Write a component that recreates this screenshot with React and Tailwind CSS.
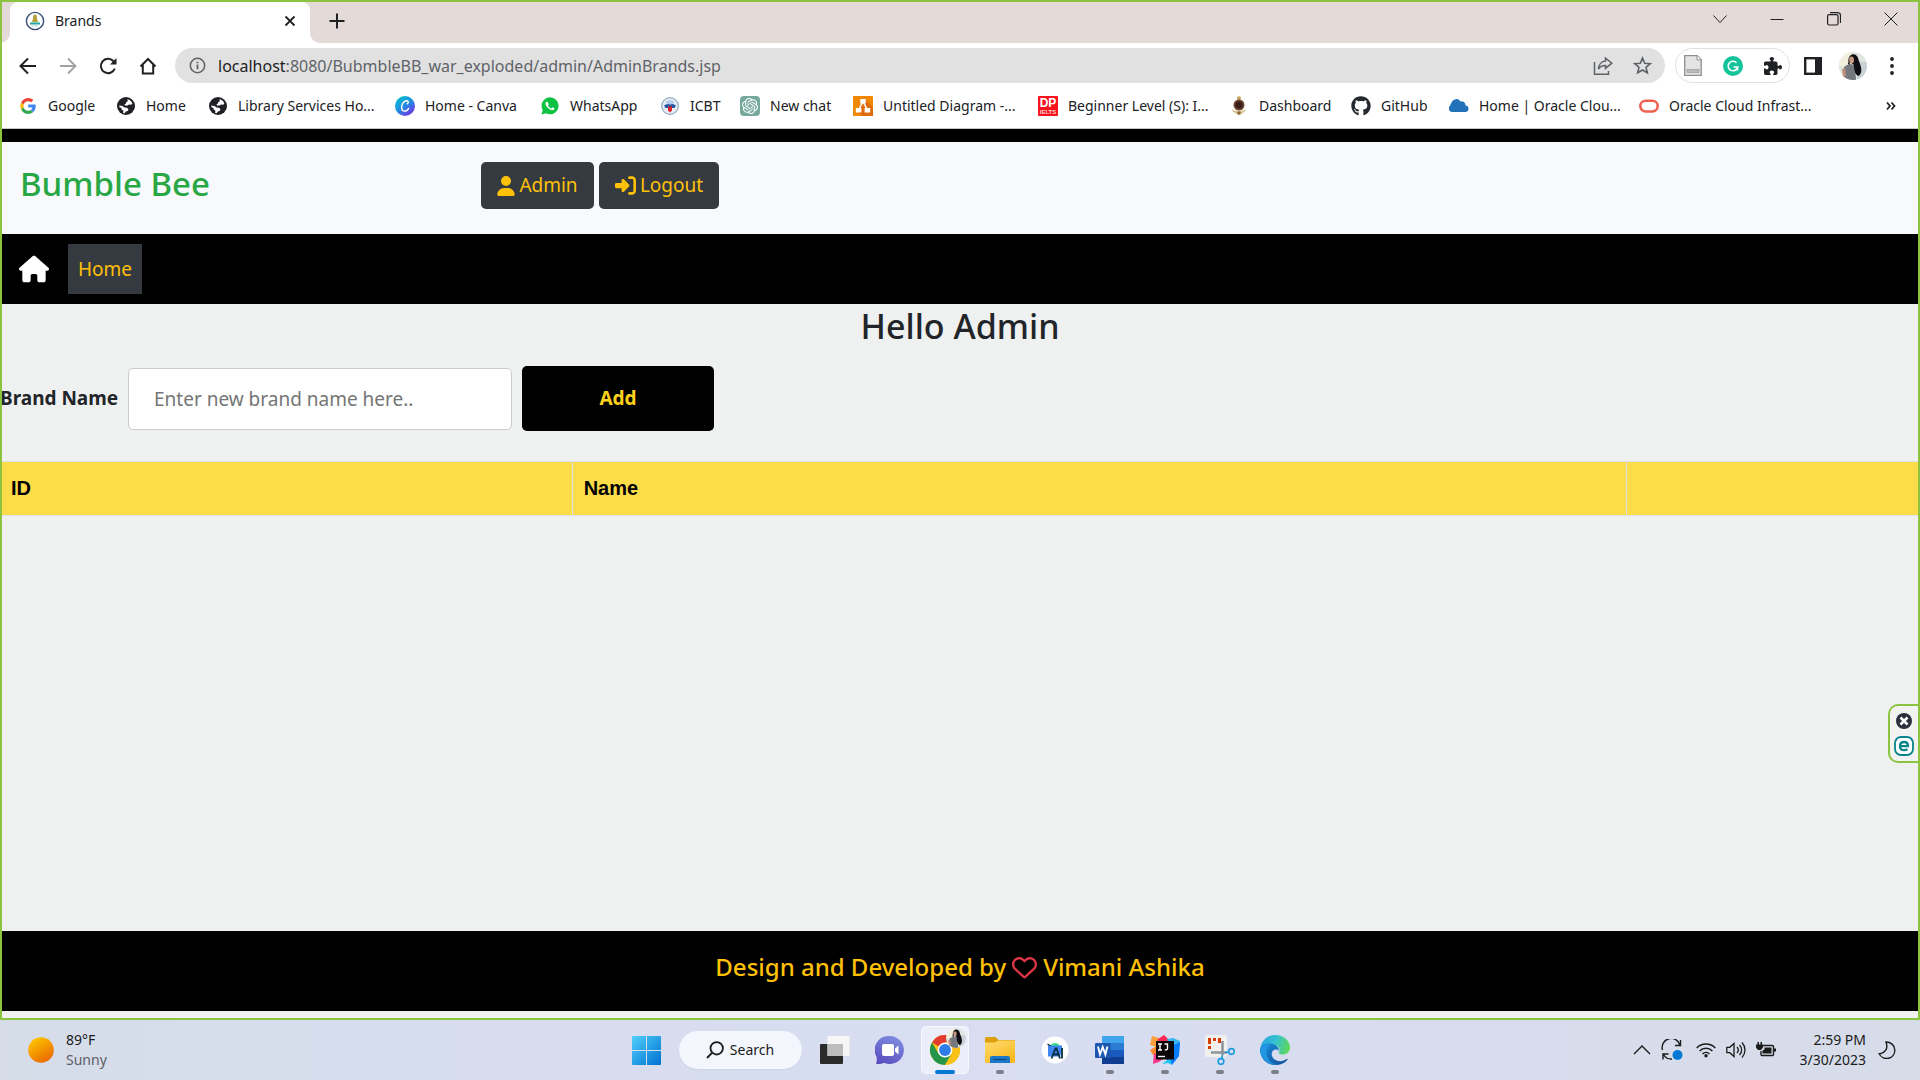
import React from "react";
import { FaUser, FaHouse, FaRightToBracket, FaRegHeart, FaGithub, FaPuzzlePiece } from "react-icons/fa6";
import { FcGoogle } from "react-icons/fc";
import { SiOpenai } from "react-icons/si";

/* ---------- Bookmark icons ---------- */

function GoogleIcon() {
  return (
    <svg viewBox="0 0 18 18" className="size-4">
      <path d="M3.900 9a5.200 5.200 0 0 1 .3-1.700L1.300 5A9 9 0 0 0 1.300 13l2.900-2.300A5.200 5.200 0 0 1 3.900 9z" fill="#fbbc05" />
      <path d="M9.200 3.600c1.300 0 2.400.5 3.300 1.200L15.100 2.200A8.900 8.900 0 0 0 1.300 5l2.900 2.300a5.300 5.300 0 0 1 5-3.700z" fill="#ea4335" />
      <path d="M9.200 14.400a5.300 5.300 0 0 1-5-3.700L1.300 13a8.900 8.900 0 0 0 7.900 5c2.200 0 4.200-.8 5.800-2.200l-2.800-2.200c-.8.500-1.800.8-3 .8z" fill="#34a853" />
      <path d="M17.700 9c0-.5-.1-1.100-.2-1.600H9.200v3.400h4.700a4 4 0 0 1-1.700 2.800l2.800 2.200c1.600-1.500 2.700-3.800 2.700-6.800z" fill="#4285f4" />
    </svg>
  );
}

function GlobeIcon() {
  return (
    <svg viewBox="0 0 18 18" className="size-[18px]">
      <circle cx="9" cy="9" r="9" fill="#202124" />
      <path d="M10.500 2.300c2.300.5 4.200 2.100 4.900 4.300l-1.200 1.200-2.200-.2-1.500.9-2.500.1-.5-1.300 1.500-.8.300-1.500 1.400-.6z" fill="#fff" />
      <path d="M2.200 8.500l3.300.6 2 1.500 2.400.2 1.600 1.400-.8 1.700-1.900.7-.9 1.500c-.7.100-1.200 0-1.700-.2l.2-2.100-1.700-1.400-.3-1.500-1.900-.7z" fill="#fff" />
    </svg>
  );
}

function CanvaIcon() {
  return (
    <svg viewBox="0 0 20 20" className="size-5">
      <defs>
        <linearGradient id="canva" x1="0.1" y1="0" x2="0.8" y2="1">
          <stop offset="0" stopColor="#00c4cc" />
          <stop offset="0.5" stopColor="#1f8fe0" />
          <stop offset="1" stopColor="#7d2ae8" />
        </linearGradient>
      </defs>
      <circle cx="10" cy="10" r="10" fill="url(#canva)" />
      <path d="M12.300 7.700c1.300-.2 1.500-3-.6-3-2.900 0-5.100 3.400-5.100 6.600 0 2.300 1.200 3.800 3.100 3.800 1.900 0 3.300-1.300 4-2.700" fill="none" stroke="#fff" strokeWidth="1.400" strokeLinecap="round" />
    </svg>
  );
}

function WhatsAppIcon() {
  return (
    <svg viewBox="0 0 20 20" className="size-5">
      <path d="M1.500 18.500l1.200-4.400A8.500 8.500 0 1 1 6 17.300z" fill="#0dc143" />
      <path d="M7 5.500c-.4-.2-1.500.7-1.500 2 0 2.600 4 6.600 7 6.600 1.300 0 2.200-1 2-1.800l-2-1.100-1.200 1.200c-1.500-.5-2.700-1.700-3.300-3l1-1.100z" fill="#fff" />
    </svg>
  );
}

function IcbtIcon() {
  return (
    <svg viewBox="0 0 18 18" className="size-[18px]">
      <circle cx="9" cy="9" r="8.300" fill="#e8eef4" stroke="#8fa9bd" strokeWidth="1.200" />
      <path d="M4.500 4.500Q9 1.500 13.500 4.500L12 7H6z" fill="#b4cdea" />
      <path d="M3 8.500Q6 6 9 7.500 12 6 15 8.500L13.500 11h-9z" fill="#2357a5" />
      <path d="M7 8.500l2 1.500 2-1.500v5L9 15.500l-2-2z" fill="#d8232f" />
    </svg>
  );
}

function ChatIcon() {
  return (
    <span className="flex size-5 items-center justify-center rounded-sm bg-[#75a99c]">
      <SiOpenai className="size-4 text-white" />
    </span>
  );
}

function DiagramIcon() {
  return (
    <svg viewBox="0 0 20 20" className="size-5">
      <rect width="20" height="20" rx="1" fill="#f08705" />
      <path d="M12 3.500l8 8V20H9l-6-6z" fill="#df6c0c" />
      <path d="M10 5.500L5.500 14M10 5.500l4.500 8.500" stroke="#fff" strokeWidth="1.600" />
      <rect x="7.200" y="3" width="5.600" height="4.600" rx=".6" fill="#fff" />
      <rect x="2.800" y="12" width="5.600" height="4.600" rx=".6" fill="#fff" />
      <rect x="11.600" y="12" width="5.600" height="4.600" rx=".6" fill="#fff" />
    </svg>
  );
}

function DpIcon() {
  return (
    <svg viewBox="0 0 20 20" className="size-5">
      <rect width="20" height="20" rx="1" fill="#f5141c" />
      <text x="10" y="11" textAnchor="middle" fontFamily="Liberation Sans" fontWeight="700" fontSize="12" fill="#fff">DP</text>
      <text x="10" y="17.500" textAnchor="middle" fontFamily="Liberation Sans" fontWeight="700" fontSize="6" fill="#ffd0d0">IELTS</text>
    </svg>
  );
}

function CrestIcon() {
  return (
    <svg viewBox="0 0 18 20" className="h-5 w-[18px]">
      <circle cx="9" cy="2.300" r="2" fill="#c9a45c" />
      <circle cx="9" cy="9" r="5.500" fill="#6a4030" />
      <circle cx="9" cy="9" r="3.500" fill="#3a1c18" />
      <path d="M2 12.500c1.500 3.500 12.500 3.500 14 0-.3 3.500-4 5-7 6.700-3-1.700-6.700-3.200-7-6.700z" fill="#d9c089" />
      <circle cx="9" cy="17" r="1.800" fill="#8a6a3c" />
    </svg>
  );
}

function CloudIcon() {
  return (
    <svg viewBox="0 0 20 20" className="size-5">
      <path d="M3.500 16a3.500 3.500 0 0 1-2.500-6.200l1.500-3.300A5 5 0 0 1 11.500 5.500a3.800 3.800 0 0 1 5 4A3.300 3.300 0 0 1 17 16z" fill="#2272b9" />
    </svg>
  );
}

function OracleIcon() {
  return (
    <svg viewBox="0 0 20 20" className="size-5">
      <rect x="1.300" y="4.800" width="17.400" height="10.600" rx="5.300" fill="none" stroke="#ee5f50" strokeWidth="2.500" />
    </svg>
  );
}

const bookmarks = [
  { label: "Google", icon: <GoogleIcon />, width: "w-[98px]" },
  { label: "Home", icon: <GlobeIcon />, width: "w-[92px]" },
  { label: "Library Services Ho...", icon: <GlobeIcon />, width: "w-[187px]" },
  { label: "Home - Canva", icon: <CanvaIcon />, width: "w-[145px]" },
  { label: "WhatsApp", icon: <WhatsAppIcon />, width: "w-[120px]" },
  { label: "ICBT", icon: <IcbtIcon />, width: "w-[80px]" },
  { label: "New chat", icon: <ChatIcon />, width: "w-[113px]" },
  { label: "Untitled Diagram -...", icon: <DiagramIcon />, width: "w-[185px]" },
  { label: "Beginner Level (S): I...", icon: <DpIcon />, width: "w-[191px]" },
  { label: "Dashboard", icon: <CrestIcon />, width: "w-[122px]" },
  { label: "GitHub", icon: <FaGithub className="size-5 text-[#24292f]" />, width: "w-[98px]" },
  { label: "Home | Oracle Clou...", icon: <CloudIcon />, width: "w-[190px]" },
  { label: "Oracle Cloud Infrast...", icon: <OracleIcon />, width: "w-[190px]" },
];

/* ---------- Browser chrome ---------- */

function Favicon() {
  return (
    <svg viewBox="0 0 20 20" className="size-5">
      <circle cx="10" cy="10" r="8.600" fill="#fff" stroke="#3b4e78" strokeWidth="1.400" />
      <path d="M10 3.500c1.500 0 2 1.500 2 3.500s1 2.500 1 4H7c0-1.500 1-2 1-4s.5-3.500 2-3.500z" fill="#b5a13a" />
      <path d="M5 12.500h10" stroke="#1fa39b" strokeWidth="2" />
      <path d="M7 15h6" stroke="#a9d8d5" strokeWidth="1" />
    </svg>
  );
}

function Avatar({ className }) {
  return (
    <svg viewBox="0 0 28 28" className={className}>
      <defs>
        <clipPath id="face"><circle cx="14" cy="14" r="14" /></clipPath>
      </defs>
      <g clipPath="url(#face)">
        <rect width="28" height="28" fill="#dfe6df" />
        <path d="M0 0h12v14H0z" fill="#f3efdf" />
        <path d="M18 10h10v18H18z" fill="#c9d3d6" />
        <path d="M5 15c3-3 8-4 11-1l1 14H4z" fill="#74787f" />
        <path d="M3 17l3-1 1 8-3 1z" fill="#c08f78" />
        <path d="M9.500 9c-.5-8 8-9 9.500-3 1 4 3 7 3.300 11 .2 4-1.300 6-2.800 7-3-1-4.500-5-4.500-11z" fill="#0e0e13" />
        <ellipse cx="12.500" cy="8" rx="2.500" ry="3.500" fill="#c99a83" />
        <path d="M9 12l1-5 1 6z" fill="#0e0e13" />
      </g>
    </svg>
  );
}

const iconButton = "flex shrink-0 items-center justify-center text-[#202124]";

function TabStrip() {
  return (
    <div className="flex h-[43px] items-end bg-[#e4dad7] pt-[2px]">
      <svg viewBox="0 0 10 10" className="size-[10px]"><path d="M0 10A10 10 0 0 0 10 0v10z" fill="#fff" /></svg>
      <div className="flex h-full w-[300px] items-center rounded-t-lg bg-white pr-[14px] pb-1 pl-[15px]">
        <Favicon />
        <span className="ml-[10px] flex-1 text-sm text-[#202124]">Brands</span>
        <button aria-label="Close tab" className={iconButton}>
          <svg viewBox="0 0 12 12" className="size-3" stroke="currentColor" strokeWidth="1.800"><path d="M1.500 1.500l9 9M10.500 1.500l-9 9" /></svg>
        </button>
      </div>
      <svg viewBox="0 0 10 10" className="size-[10px]"><path d="M10 10A10 10 0 0 1 0 0v10z" fill="#fff" /></svg>
      <button aria-label="New tab" className={`${iconButton} ml-[9px] h-full w-4 pb-1`}>
        <svg viewBox="0 0 16 16" className="size-4" stroke="currentColor" strokeWidth="2"><path d="M8 0.500v15M.5 8h15" /></svg>
      </button>
      <div className="ml-auto flex h-full items-start text-[#202124]">
        <button aria-label="Search tabs" className="flex h-[33px] w-[57px] items-center justify-center">
          <svg viewBox="0 0 14 14" className="size-[14px]" fill="none" stroke="currentColor"><path d="M.5 3.500L7 10.500l6.500-7" /></svg>
        </button>
        <button aria-label="Minimize" className="flex h-[33px] w-[57px] items-center justify-center">
          <svg viewBox="0 0 14 14" className="size-[14px]" fill="none" stroke="currentColor"><path d="M.5 7.500h13" /></svg>
        </button>
        <button aria-label="Restore" className="flex h-[33px] w-[57px] items-center justify-center">
          <svg viewBox="0 0 14 14" className="size-[14px]" fill="none" stroke="currentColor" strokeWidth="1.200"><rect x=".6" y="2.600" width="10.400" height="10.400" rx="1.500" /><path d="M3 .6h7.500a3 3 0 0 1 3 3V11" /></svg>
        </button>
        <button aria-label="Close" className="flex h-[33px] w-[58px] items-center justify-center">
          <svg viewBox="0 0 14 14" className="size-[14px]" fill="none" stroke="currentColor"><path d="M.5.5l13 13M13.500.5l-13 13" /></svg>
        </button>
      </div>
    </div>
  );
}

function Toolbar() {
  return (
    <div className="flex h-[45px] items-center bg-white pl-[19px]">
      <div className="flex w-[156px] items-center gap-[22px]">
        <button aria-label="Back" className={iconButton}>
          <svg viewBox="0 0 18 18" className="size-[18px]" fill="none" stroke="currentColor" strokeWidth="2"><path d="M17 9H2M9 1.500L1.500 9 9 16.500" /></svg>
        </button>
        <button aria-label="Forward" className={iconButton}>
          <svg viewBox="0 0 18 18" className="size-[18px]" fill="none" stroke="#a0a1a3" strokeWidth="1.800"><path d="M1 9h15M9 1.500L16.500 9 9 16.500" /></svg>
        </button>
        <button aria-label="Reload" className={iconButton}>
          <svg viewBox="0 0 18 18" className="size-[18px]" fill="none" stroke="currentColor" strokeWidth="2"><path d="M15.800 11.500A7.200 7.200 0 1 1 14.300 4l2 2" /><path d="M17.500 1v6.500H11z" fill="currentColor" stroke="none" /></svg>
        </button>
        <button aria-label="Home" className={iconButton}>
          <svg viewBox="0 0 18 18" className="size-[18px]" fill="none" stroke="currentColor" strokeWidth="2"><path d="M1.500 9.500L9 2l7.500 7.500M3.800 8v8.500h10.400V8" /></svg>
        </button>
      </div>
      <div className="flex h-[35px] min-w-0 flex-1 items-center rounded-full bg-[#e1e1e1] pr-[13px] pl-[14px] text-[#5f6368]">
        <svg viewBox="0 0 18 18" className="size-[17px]" fill="none" stroke="currentColor" strokeWidth="1.600"><circle cx="9" cy="9" r="7.600" /><path d="M9 8v5M9 5v1.700" strokeWidth="1.900" /></svg>
        <p className="ml-3 flex-1 truncate text-base">
          <span className="text-[#202124]">localhost</span>:8080/BubmbleBB_war_exploded/admin/AdminBrands.jsp
        </p>
        <button aria-label="Share" className="mr-5">
          <svg viewBox="0 0 20 20" className="size-5" fill="none" stroke="currentColor" strokeWidth="1.500"><path d="M1.500 6v12.300h14V15" /><path d="M12.500 2l6.300 5.200-6.300 5.200V9.500c-3.500 0-5.500 1-7 3.500.2-4.500 3-7.700 7-8z" /></svg>
        </button>
        <button aria-label="Bookmark this page">
          <svg viewBox="0 0 20 20" className="size-[19px]" fill="none" stroke="currentColor" strokeWidth="1.700"><path d="M10 2.200l2.300 5.400 5.900.5-4.500 3.900 1.400 5.700-5.100-3-5.100 3L6.300 12 1.800 8.100l5.900-.5z" /></svg>
        </button>
      </div>
      <div className="ml-[10px] flex h-[35px] w-[115px] items-center justify-between rounded-full border border-[#dfe0e2] pr-[7px] pl-2">
        <button aria-label="Page notes">
          <svg viewBox="0 0 18 21" className="h-[21px] w-[18px]"><path d="M.7.7h12.500l4 4v15.600H.7z" fill="#e4e4e4" stroke="#8f8f8f" strokeWidth="1.300" /><path d="M13 .7v4.200h4.200" fill="#fff" stroke="#8f8f8f" /><rect x="3" y="14.500" width="12" height="3" fill="#b9b9b9" stroke="#8f8f8f" strokeWidth=".6" /></svg>
        </button>
        <button aria-label="Grammar check">
          <svg viewBox="0 0 20 20" className="size-5"><circle cx="10" cy="10" r="10" fill="#15c39a" /><path d="M13.500 6.700A4.800 4.800 0 1 0 14.700 11H10.500M14.700 11l-.3 3.500" fill="none" stroke="#fff" strokeWidth="1.600" /></svg>
        </button>
        <button aria-label="Extensions" className={iconButton}><FaPuzzlePiece className="size-[18px]" /></button>
      </div>
      <button aria-label="Side panel" className={`${iconButton} ml-[14px]`}>
        <svg viewBox="0 0 18 18" className="size-[18px]"><rect x="1.200" y="1.200" width="15.600" height="15.600" fill="none" stroke="currentColor" strokeWidth="2.400" /><path d="M11 1h6v16h-6z" fill="currentColor" /></svg>
      </button>
      <button aria-label="Profile" className="ml-[17px]"><Avatar className="size-7" /></button>
      <button aria-label="Menu" className={`${iconButton} mr-[19px] ml-4 w-[18px]`}>
        <svg viewBox="0 0 4 18" className="h-[18px] w-1" fill="currentColor"><circle cx="2" cy="2" r="1.900" /><circle cx="2" cy="9" r="1.900" /><circle cx="2" cy="16" r="1.900" /></svg>
      </button>
    </div>
  );
}

function BookmarksBar() {
  return (
    <nav aria-label="Bookmarks" className="flex h-[41px] items-center border-b border-[#c9c9c9] bg-white pb-1 pl-[18px] text-sm text-[#202124]">
      {bookmarks.map((b) => (
        <a key={b.label} href="#" className={`${b.width} flex shrink-0 items-center whitespace-nowrap`}>
          <span className="mr-[10px] flex w-5 shrink-0 justify-center">{b.icon}</span>
          {b.label}
        </a>
      ))}
      <button aria-label="More bookmarks" className="mr-6 ml-auto">
        <svg viewBox="0 0 10 10" className="size-[10px]" fill="none" stroke="#202124" strokeWidth="1.800"><path d="M1 1.500L4 5 1 8.500M5.500 1.500l3 3.500-3 3.500" /></svg>
      </button>
    </nav>
  );
}

/* ---------- Page ---------- */

function SiteHeader() {
  const button = "flex h-[47px] items-center justify-center gap-1 rounded-[5px] bg-[#343a40] text-[19px] text-[#ffc107]";
  return (
    <header>
      <div className="flex h-[105px] items-start border-t-[13px] border-black bg-[#f8f9fc]">
        <h1 className="w-1/4 pt-4 pl-5 text-[33px] leading-[52px] font-medium text-[#28a745]">Bumble Bee</h1>
        <div className="flex gap-[5px] pt-5 pl-px">
          <button className={`${button} w-[113px]`}><FaUser className="h-5 w-[18px]" />Admin</button>
          <button className={`${button} w-[120px]`}><FaRightToBracket className="size-[21px]" />Logout</button>
        </div>
      </div>
      <nav className="flex h-[70px] items-center gap-[19px] bg-black pl-[19px]">
        <a href="#" aria-label="Start page"><FaHouse className="size-[30px] text-white" /></a>
        <a href="#" className="flex h-[50px] w-[74px] items-center justify-center bg-[#343a40] text-[19px] text-[#ffc107]">Home</a>
      </nav>
    </header>
  );
}

function BrandPage() {
  return (
    <main className="flex-1">
      <h2 className="text-center text-[34px] leading-[44px] font-medium text-[#212529]">Hello Admin</h2>
      <form className="mt-[18px] flex h-[65px] items-center" onSubmit={(e) => e.preventDefault()}>
        <label htmlFor="brand" className="w-32 shrink-0 text-[19px] font-bold whitespace-nowrap text-[#212529]">Brand Name</label>
        <input id="brand" type="text" placeholder="Enter new brand name here.." className="h-[62px] w-1/5 rounded-[5px] border border-[#ccc] bg-white px-[25px] text-[19px] text-[#212529] placeholder:text-[#757575]" />
        <button className="ml-[10px] h-full w-1/10 rounded-[5px] bg-black text-[19px] font-bold text-[#ffd11a]">Add</button>
      </form>
      <table className="mt-[30px] w-full table-fixed border-collapse font-['Liberation_Sans',sans-serif] text-xl text-black">
        <thead>
          <tr className="h-[54px] border-y border-[#dee2e6] bg-[#fddc4a] text-left">
            <th className="w-[29.8%] border-r border-[#dee2e6] pb-[2px] pl-[11px]">ID</th>
            <th className="w-[54.9%] border-r border-[#dee2e6] pb-[2px] pl-[11px]">Name</th>
            <th aria-label="Actions" />
          </tr>
        </thead>
      </table>
    </main>
  );
}

function SideWidget() {
  return (
    <div className="absolute top-[704px] right-0 flex h-[59px] w-8 flex-col items-center justify-center gap-[7px] rounded-l-[10px] border-2 border-r-0 border-[#8bc53f] bg-[#f3f3f3] pt-[2px] pr-[2px]">
      <button aria-label="Dismiss">
        <svg viewBox="0 0 16 16" className="size-4"><circle cx="8" cy="8" r="8" fill="#2d2f3c" /><path d="M4.500 4.500l7 7M11.500 4.500l-7 7" stroke="#fff" strokeWidth="2.600" /></svg>
      </button>
      <button aria-label="Open assistant">
        <svg viewBox="0 0 20 20" className="size-5"><rect x="1" y="1" width="18" height="18" rx="6" fill="#fff" stroke="#0b868c" strokeWidth="1.800" /><path d="M6 10.200h8c0-2.500-1.500-4.200-3.900-4.200S6 7.600 6 10.200s1.600 4 4.200 4c1.300 0 2.400-.3 3.300-.9" fill="none" stroke="#0b868c" strokeWidth="2.300" /></svg>
      </button>
    </div>
  );
}

/* ---------- Taskbar ---------- */

function TaskViewIcon() {
  return (
    <svg viewBox="0 0 30 30" className="size-[30px]">
      <rect x="0" y="9" width="23" height="20" rx="1" fill="#2b2b2b" />
      <rect x="7.500" y="1" width="22" height="20" rx="1" fill="#f6f6f6" />
      <rect x="7.500" y="9" width="15.500" height="12" fill="#bdbdbd" />
    </svg>
  );
}

function ChatAppIcon() {
  return (
    <svg viewBox="0 0 30 30" className="size-[30px]">
      <defs><linearGradient id="chat" x1=".8" y1="0" x2=".3" y2="1"><stop offset="0" stopColor="#7f8fe0" /><stop offset="1" stopColor="#5b4fc0" /></linearGradient></defs>
      <path d="M15 1a14 14 0 1 1-6 26.700c-2.500 1.300-5 1.600-8 1.300.8-2 1-4 .6-7A14 14 0 0 1 15 1z" fill="url(#chat)" />
      <rect x="7" y="9" width="12" height="12" rx="2" fill="#fff" />
      <path d="M20 13.500l3.500-3v9l-3.500-3z" fill="#fff" />
    </svg>
  );
}

function ChromeIcon() {
  return (
    <span className="relative">
      <svg viewBox="0 0 30 30" className="size-[30px]">
        <circle cx="15" cy="15" r="15" fill="#fbc116" />
        <path d="M15 15L2 7.500A15 15 0 0 1 28 7.500H15z" fill="#e33b2e" />
        <path d="M2 7.500A15 15 0 0 0 15 30l6.500-11.300L15 15 8.500 18.700z" fill="#23964a" />
        <path d="M15 7.500h13A15 15 0 0 1 15 30l6.500-11.300z" fill="#fbc116" />
        <circle cx="15" cy="15" r="7.400" fill="#fff" />
        <circle cx="15" cy="15" r="5.900" fill="#2f7ee8" />
      </svg>
      <Avatar className="absolute -top-[7px] left-4 size-5" />
    </span>
  );
}

function FolderIcon() {
  return (
    <svg viewBox="0 0 30 30" className="size-[30px]">
      <defs><linearGradient id="folder" x1="0" y1="0" x2=".6" y2="1"><stop offset="0" stopColor="#ffdc73" /><stop offset="1" stopColor="#f9b91c" /></linearGradient></defs>
      <path d="M0 3.500A1.500 1.500 0 0 1 1.500 2h9l3 3H30v4H0z" fill="#dda00c" />
      <path d="M0 7.500h10l3-2h17v21A1.500 1.500 0 0 1 28.500 28h-27A1.500 1.500 0 0 1 0 26.500z" fill="url(#folder)" />
      <path d="M5 28v-5a2 2 0 0 1 2-2h16a2 2 0 0 1 2 2v5z" fill="#1b78c6" />
      <path d="M8.500 24.500h13" stroke="#0e4a80" strokeWidth="1.300" />
    </svg>
  );
}

function AndroidStudioIcon() {
  return (
    <svg viewBox="0 0 28 28" className="size-7">
      <circle cx="14" cy="14" r="13.500" fill="#fff" />
      <path d="M9 10a5.500 5 0 0 1 10 0z" fill="#3ddc84" />
      <path d="M7 9.500h14v5l-2 6H7z" fill="#4285f4" />
      <path d="M10.500 22.500l4-10h1l3.500 10M12.500 18.500h5M21 12v10.500" fill="none" stroke="#073042" strokeWidth="1.800" />
      <path d="M6.500 8l3 2" stroke="#073042" strokeWidth="1.500" />
    </svg>
  );
}

function WordIcon() {
  return (
    <svg viewBox="0 0 30 30" className="size-[30px]">
      <path d="M7 1h22v7H7z" fill="#41a5ee" />
      <path d="M7 8h22v7H7z" fill="#2b7cd3" />
      <path d="M7 15h22v7H7z" fill="#185abd" />
      <path d="M7 22h22v7H7z" fill="#103f91" />
      <rect x="0" y="8" width="15.500" height="15" rx="1.300" fill="#1b56b0" />
      <path d="M3 11.500l2 8 2.700-7.500 2.700 7.500 2-8" fill="none" stroke="#fff" strokeWidth="1.900" />
    </svg>
  );
}

function IntellijIcon() {
  return (
    <svg viewBox="0 0 30 30" className="size-[30px]">
      <path d="M2 1l7 2-2 9-7-2z" fill="#fc9f3c" />
      <path d="M8 4l6-4 5 5-3 8-9-2z" fill="#fe2857" />
      <path d="M0 15l8-5 2 13-7-3z" fill="#fb8b2e" />
      <path d="M3 29l1-11 9 6-4 3z" fill="#f93b8e" />
      <path d="M17 4l6-1 7 3-1 9-8 2z" fill="#38b6f1" />
      <path d="M30 7l-1 14-7 9-6-6 8-14z" fill="#087cfa" />
      <path d="M12 29l8-6 2 7-4-2z" fill="#20c2f5" />
      <rect x="6" y="6" width="18" height="18.500" fill="#0b0608" />
      <path d="M8 9h4M10 9v6M8 15h4M14.500 9h3v4.500q0 1.700-2.800 1.300" fill="none" stroke="#fff" strokeWidth="1.400" />
      <path d="M8 21.500h7" stroke="#fff" strokeWidth="1.400" />
    </svg>
  );
}

function SnipIcon() {
  return (
    <svg viewBox="0 0 30 30" className="size-[30px]">
      <rect x="0" y="0" width="22" height="22" rx="2.500" fill="#f1f0ee" />
      <path d="M3 4.500h13M4.500 6v10M14.500 6v2" fill="none" stroke="#d83b01" strokeWidth="3" strokeDasharray="3 2" />
      <path d="M17.500 6v14M6 17.500h16" fill="none" stroke="#8b9299" strokeWidth="2.500" />
      <circle cx="26.500" cy="16.500" r="2.800" fill="none" stroke="#1f9be0" strokeWidth="1.700" />
      <circle cx="16" cy="26.500" r="2.800" fill="none" stroke="#1f9be0" strokeWidth="1.700" />
      <path d="M20 17.500l4-.5M17.500 20l-1 4" stroke="#1f9be0" strokeWidth="1.700" />
    </svg>
  );
}

function EdgeIcon() {
  return (
    <svg viewBox="0 0 30 30" className="size-[30px]">
      <defs>
        <linearGradient id="edgeTop" x1="0" y1=".3" x2="1" y2=".5"><stop offset="0" stopColor="#2aa5e0" /><stop offset=".5" stopColor="#35c1d0" /><stop offset="1" stopColor="#5fd85a" /></linearGradient>
        <linearGradient id="edgeLow" x1="0" y1="0" x2="1" y2="1"><stop offset="0" stopColor="#1b8fdc" /><stop offset="1" stopColor="#0f4f9c" /></linearGradient>
      </defs>
      <path d="M.5 13C1.500 5.500 7.500 0 15 0c9 0 15 6 15 12.500 0 4-3 7-7 7-3 0-5-1-4-2.500 2-3-1-7-5.500-7C8 10 2 10.500.5 13z" fill="url(#edgeTop)" />
      <path d="M.1 14C1 9.500 6 8 10.500 8.500c5 .5 9 4 8.300 7.500-2.500-3-7.800-1-7 4 .7 4.500 6.500 7.500 12 5.500 2.500-1 3.700-2 4-1.500C25.500 28 20.500 30 15 30 6 30-.5 22.500.1 14z" fill="url(#edgeLow)" />
      <path d="M10 10c-4 3-4.500 9-2 13.500 2 3.500 5.500 6 10 6.100C10 31 .5 25 .1 14.500.8 11 5.500 8.500 10 10z" fill="#2196e3" />
    </svg>
  );
}

const apps = [
  { name: "Task view", icon: <TaskViewIcon />, state: "idle" },
  { name: "Chat", icon: <ChatAppIcon />, state: "idle" },
  { name: "Chrome", icon: <ChromeIcon />, state: "active" },
  { name: "File Explorer", icon: <FolderIcon />, state: "open" },
  { name: "Android Studio", icon: <AndroidStudioIcon />, state: "idle" },
  { name: "Word", icon: <WordIcon />, state: "open" },
  { name: "IntelliJ IDEA", icon: <IntellijIcon />, state: "open" },
  { name: "Snipping Tool", icon: <SnipIcon />, state: "open" },
  { name: "Edge", icon: <EdgeIcon />, state: "open" },
];

const cellStyle = {
  idle: "",
  open: "",
  active: "rounded-[5px] border border-white/60 bg-white/50",
};

const markStyle = {
  idle: "",
  open: "w-2 bg-[#7b7f88]",
  active: "w-5 bg-[#0078d4]",
};

function Taskbar() {
  return (
    <footer className="grid h-[60px] grid-cols-[1fr_auto_1fr] items-center bg-linear-to-r from-[#d6dde9] via-[#d8ddf2] to-[#d6dce8]">
      <div className="flex items-center gap-3 pl-7">
        <svg viewBox="0 0 26 26" className="size-[26px]">
          <defs><linearGradient id="sun" x1=".2" y1="0" x2=".8" y2="1"><stop offset="0" stopColor="#ffc800" /><stop offset="1" stopColor="#e86400" /></linearGradient></defs>
          <circle cx="13" cy="13" r="12.800" fill="url(#sun)" />
        </svg>
        <p className="text-sm leading-5 text-[#1b1b1b]">89°F<br /><span className="text-[#5d6068]">Sunny</span></p>
      </div>
      <div className="flex items-center pl-[14px]">
        <button aria-label="Start">
          <svg viewBox="0 0 29 29" className="size-[29px]">
            <defs><linearGradient id="win" x1="0" y1="0" x2="1" y2="1"><stop offset="0" stopColor="#4fd0fb" /><stop offset="1" stopColor="#0070d0" /></linearGradient></defs>
            <path d="M0 1q0-1 1-1h13v14H0zM15 0h13q1 0 1 1v13H15zM0 15h14v14H1q-1 0-1-1zM15 15h14v13q0 1-1 1H15z" fill="url(#win)" />
          </svg>
        </button>
        <button className="ml-[18px] flex h-[38px] w-[123px] items-center justify-center gap-[6px] rounded-full bg-[#f3f6fc] text-sm text-[#1b1b1b] shadow-xs">
          <svg viewBox="0 0 18 18" className="size-[18px]" fill="none" stroke="currentColor" strokeWidth="1.800"><circle cx="10.700" cy="7.300" r="6.200" /><path d="M6.300 11.700L1 17" /></svg>
          Search
        </button>
        <div className="ml-[6px] flex">
          {apps.map((app) => (
            <button key={app.name} aria-label={app.name} className="relative flex h-12 w-[55px] justify-center">
              <span className={`flex h-12 w-12 items-center justify-center ${cellStyle[app.state]}`}>{app.icon}</span>
              <span className={`absolute bottom-0 h-1 rounded-full ${markStyle[app.state]}`} />
            </button>
          ))}
        </div>
      </div>
      <div className="flex items-center justify-end pr-6 text-[#1b1b1b]">
        <button aria-label="Hidden icons"><svg viewBox="0 0 18 18" className="size-[18px]" fill="none" stroke="currentColor" strokeWidth="1.400"><path d="M1 13l8-8 8 8" /></svg></button>
        <svg viewBox="0 0 22 22" className="ml-[10px] size-[22px]" fill="none" stroke="currentColor" strokeWidth="1.400"><path d="M1.500 11A9 9 0 0 1 19 6M19.500 1v5.500H14M2 20.500V15h5.500M2.500 15.500A9 9 0 0 0 11 20" /><circle cx="16.500" cy="16" r="5" fill="#0078d4" stroke="none" /></svg>
        <svg viewBox="0 0 20 16" className="ml-[13px] h-4 w-5" fill="none" stroke="currentColor" strokeWidth="1.500"><path d="M.7 6a13 13 0 0 1 18.600 0M3.600 9a9 9 0 0 1 12.800 0M6.500 12a5 5 0 0 1 7 0" /><circle cx="10" cy="13.800" r="1.700" fill="currentColor" stroke="none" /></svg>
        <svg viewBox="0 0 20 18" className="ml-[10px] h-[18px] w-5" fill="none" stroke="currentColor" strokeWidth="1.300"><path d="M.8 6.300h3L8 2.500v13l-4.200-3.800h-3zM11 6a4.500 4.500 0 0 1 0 6M13.500 4a7 7 0 0 1 0 10M16 1.500a11 11 0 0 1 0 15" /></svg>
        <svg viewBox="0 0 20 18" className="ml-[10px] h-[18px] w-5" fill="none" stroke="currentColor" strokeWidth="1.400"><path d="M7 4.500h9.500a1 1 0 0 1 1 1v8a1 1 0 0 1-1 1H6a1 1 0 0 1-1-1V10" /><path d="M8.500 6.500h7v6h-9V9.500l2-1zM18 7.500h2v3h-2zM0 3.500h7v3L5 9H2L0 6.500zM1.500 1H3v3H1.500zM4.500 1H6v3H4.500z" fill="currentColor" stroke="none" /></svg>
        <p className="ml-6 text-right text-sm leading-5">2:59 PM<br />3/30/2023</p>
        <button aria-label="Notifications" className="ml-3"><svg viewBox="0 0 18 18" className="size-[18px]" fill="none" stroke="currentColor" strokeWidth="1.400"><path d="M8 1c4.500 0 8.800 3 8.800 8a8.200 8.200 0 0 1-15.600 3.800C7 12.500 10.500 7.500 8 1z" /></svg></button>
      </div>
    </footer>
  );
}

export default function App() {
  return (
    <div className="flex min-h-screen flex-col overflow-hidden bg-[#eff1f0] font-['Noto_Sans',sans-serif]">
      <div className="relative flex flex-1 flex-col pb-[9px]">
        <TabStrip />
        <Toolbar />
        <BookmarksBar />
        <SiteHeader />
        <BrandPage />
        <div className="flex h-20 justify-center bg-black pt-[18px]">
          <p className="flex h-9 items-center gap-[6px] text-2xl font-medium text-[#ffc107]">
            Design and Developed by <FaRegHeart aria-label="love" className="size-[25px] text-[#dc3545]" /> Vimani Ashika
          </p>
        </div>
        <SideWidget />
        <div className="pointer-events-none absolute inset-0 border-2 border-[#8bc53f]" />
      </div>
      <Taskbar />
    </div>
  );
}
